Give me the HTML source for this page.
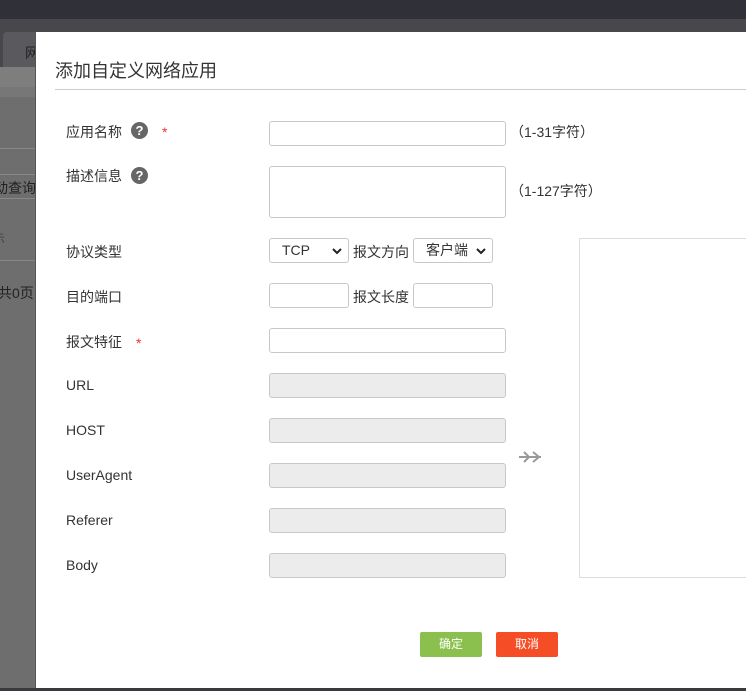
<!DOCTYPE html>
<html><head><meta charset="utf-8"><style>
*{box-sizing:border-box;margin:0;padding:0}
body{width:746px;height:691px;overflow:hidden;position:relative;background:#6e6e6e;font-family:"Liberation Sans","Noto Sans CJK SC",sans-serif;font-size:14px;color:#333}
.a{position:absolute}
.lbl{position:absolute;left:66px;font-size:14px;color:#333}
.in{position:absolute;border:1px solid #c8c8c8;border-radius:3px;background:#fff;height:25px}
.dis{background:#ececec}
.q{position:absolute;width:17px;height:17px;border-radius:50%;background:#666;color:#fff;font-size:13px;text-align:center;line-height:17px;font-weight:bold}
.star{position:absolute;color:#e33;font-size:14px}
.sel{position:absolute;border:1px solid #c8c8c8;border-radius:3px;background:#fff;height:25px;font-size:14px;line-height:23px}
.chev{position:absolute;right:6px;top:8px}
</style></head><body>
<div class="a" style="left:0;top:0;width:746px;height:19px;background:#303039"></div>
<div class="a" style="left:0;top:19px;width:746px;height:48px;background:#48474c"></div>
<div class="a" style="left:3px;top:32px;width:40px;height:35px;background:#5a595e;border-radius:4px 4px 0 0"></div>
<div class="a" style="left:25px;top:43px;color:#222;font-size:14px">网</div>
<div class="a" style="left:0;top:67px;width:35px;height:20px;background:#7e7e7e"></div>
<div class="a" style="left:0;top:87px;width:35px;height:10px;background:#777"></div>
<div class="a" style="left:0;top:148px;width:35px;height:1px;background:#888"></div>
<div class="a" style="left:0;top:174px;width:35px;height:25px;border-top:1px solid #888;border-bottom:1px solid #888"></div>
<div class="a" style="left:-6px;top:178px;color:#222;font-size:14px">动查询</div>
<div class="a" style="left:-7px;top:230px;color:#444;font-size:12px">示</div>
<div class="a" style="left:0;top:260px;width:35px;height:1px;background:#888"></div>
<div class="a" style="left:-2px;top:283px;color:#222;font-size:14px">共0页</div>
<div class="a" style="left:0;top:688px;width:746px;height:3px;background:#3a3a3e"></div>

<div class="a" style="left:35px;top:32px;width:711px;height:656px;background:#fff;border-left:1px solid #555"></div>
<div class="a" style="left:55px;top:57px;font-size:18px;color:#333">添加自定义网络应用</div>
<div class="a" style="left:55px;top:89px;width:691px;height:1px;background:#ccc"></div>

<div class="lbl" style="top:122px">应用名称</div>
<div class="q" style="left:131px;top:122px">?</div>
<div class="star" style="left:162px;top:124px">*</div>
<div class="in" style="left:269px;top:121px;width:237px"></div>
<div class="a" style="left:510px;top:122px;font-size:14px">（1-31字符）</div>

<div class="lbl" style="top:166px">描述信息</div>
<div class="q" style="left:131px;top:167px">?</div>
<div class="in" style="left:269px;top:166px;width:237px;height:52px"></div>
<div class="a" style="left:510px;top:181px;font-size:14px">（1-127字符）</div>

<div class="lbl" style="top:242px">协议类型</div>
<div class="sel" style="left:269px;top:238px;width:80px;padding-left:12px">TCP<svg class="chev" width="10" height="8"><path d="M1 2l4 4 4-4" fill="none" stroke="#222" stroke-width="2"/></svg></div>
<div class="a" style="left:353px;top:242px">报文方向</div>
<div class="sel" style="left:413px;top:238px;width:80px;padding-left:12px">客户端<svg class="chev" width="10" height="8"><path d="M1 2l4 4 4-4" fill="none" stroke="#222" stroke-width="2"/></svg></div>

<div class="lbl" style="top:287px">目的端口</div>
<div class="in" style="left:269px;top:283px;width:80px"></div>
<div class="a" style="left:353px;top:287px">报文长度</div>
<div class="in" style="left:413px;top:283px;width:80px"></div>

<div class="lbl" style="top:332px">报文特征</div>
<div class="star" style="left:136px;top:335px">*</div>
<div class="in" style="left:269px;top:328px;width:237px"></div>

<div class="lbl" style="top:377px">URL</div>
<div class="in dis" style="left:269px;top:373px;width:237px"></div>
<div class="lbl" style="top:422px">HOST</div>
<div class="in dis" style="left:269px;top:418px;width:237px"></div>
<div class="lbl" style="top:467px">UserAgent</div>
<div class="in dis" style="left:269px;top:463px;width:237px"></div>
<div class="lbl" style="top:512px">Referer</div>
<div class="in dis" style="left:269px;top:508px;width:237px"></div>
<div class="lbl" style="top:557px">Body</div>
<div class="in dis" style="left:269px;top:553px;width:237px"></div>

<svg class="a" style="left:518px;top:449px" width="25" height="16"><g fill="none" stroke="#999" stroke-width="2"><path d="M1 8H23"/><path d="M6 3l5 5-5 5"/><path d="M15 3l6 5-6 5"/></g></svg>
<div class="a" style="left:579px;top:238px;width:170px;height:340px;border:1px solid #ddd"></div>

<div class="a" style="left:420px;top:632px;width:62px;height:25px;background:#8bc04f;border-radius:2px;color:#fff;font-size:12px;text-align:center;line-height:25px">确定</div>
<div class="a" style="left:496px;top:632px;width:62px;height:25px;background:#f54d26;border-radius:2px;color:#fff;font-size:12px;text-align:center;line-height:25px">取消</div>
</body></html>
